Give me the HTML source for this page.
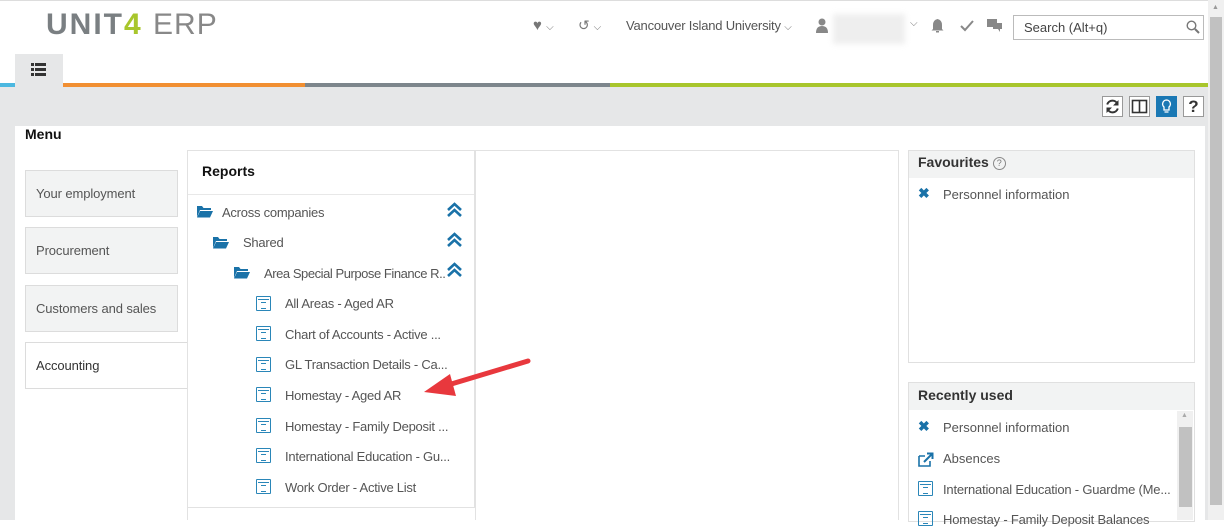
<!DOCTYPE html>
<html><head><meta charset="utf-8"><style>
*{box-sizing:border-box;margin:0;padding:0}
body{width:1224px;height:520px;overflow:hidden;background:#fff;font-family:"Liberation Sans",sans-serif;color:#555;font-size:13px;position:relative}
.a{position:absolute}
.t{position:absolute;white-space:nowrap}
.tab{position:absolute;left:25px;width:153px;height:47px;background:#f2f3f3;border:1px solid #dcdcdc;padding:15px 10px;font-size:13px;color:#555;letter-spacing:-0.1px}
.ri{position:absolute;left:256px;width:15px;height:15px;border:1.5px solid #2a86b8;border-radius:1px}
.ri:before{content:"";position:absolute;left:1px;right:1px;top:2px;height:1px;background:#2a86b8}
.ri:after{content:"";position:absolute;left:4px;top:5px;width:5px;height:5px;border-top:1px solid #2a86b8;border-bottom:1px solid #2a86b8}
.rt{position:absolute;left:285px;white-space:nowrap;font-size:13px;color:#555;letter-spacing:-0.25px}
.fold{position:absolute}
.chev{position:absolute;left:446px}
.btn{position:absolute;top:96px;width:21px;height:21px;border:1px solid #999;background:#fff}
</style></head><body>
<div class="a" style="left:0;top:0;width:1208px;height:1px;background:#ddd"></div>
<div class="t" style="left:46px;top:8px;font-size:30px;letter-spacing:2px;color:#7a7f82;font-weight:bold">UNIT<span style="color:#a8c62c">4</span> <span style="font-weight:normal;color:#888;letter-spacing:1px">ERP</span></div>
<div class="t" style="left:533px;top:17px;font-size:15px;color:#777">♥ <span style="font-size:10px">⌵</span></div>
<div class="t" style="left:578px;top:17px;font-size:14px;color:#777">↺ <span style="font-size:10px">⌵</span></div>
<div class="t" style="left:626px;top:18px;font-size:13px;color:#555;letter-spacing:-0.2px">Vancouver Island University <span style="font-size:10px;color:#777">⌵</span></div>
<svg class="a" style="left:815px;top:18px" width="14" height="15"><circle cx="7" cy="4" r="3.5" fill="#888"/><path d="M1 15 Q1 8 7 8 Q13 8 13 15Z" fill="#888"/></svg>
<div class="a" style="left:833px;top:14px;width:72px;height:30px;background:#eee;filter:blur(3px)"></div>
<div class="t" style="left:910px;top:18px;font-size:10px;color:#777">⌵</div>
<svg class="a" style="left:931px;top:18px" width="13" height="15"><path d="M6.5 1 Q11 2 11 7 L11 11 L12.5 12.5 L0.5 12.5 L2 11 L2 7 Q2 2 6.5 1Z M5 13 h3 v1.5 h-3z" fill="#888"/></svg>
<svg class="a" style="left:960px;top:20px" width="14" height="12"><path d="M1 6 L5 10 L13 1" fill="none" stroke="#888" stroke-width="2"/></svg>
<svg class="a" style="left:987px;top:19px" width="16" height="13"><rect x="0" y="0" width="10" height="8" fill="#888"/><rect x="6" y="4" width="9" height="6" fill="#888"/><path d="M11 10 L13 13 L13 10Z" fill="#888"/></svg>
<div class="a" style="left:1013px;top:15px;width:191px;height:25px;border:1px solid #bbb;background:#fff"></div>
<div class="t" style="left:1024px;top:20px;font-size:13px;color:#444">Search (Alt+q)</div>
<svg class="a" style="left:1186px;top:20px" width="14" height="14"><circle cx="5.5" cy="5.5" r="4.3" fill="none" stroke="#777" stroke-width="1.4"/><path d="M9 9 L13 13" stroke="#777" stroke-width="2"/></svg>
<div class="a" style="left:0;top:83px;width:15px;height:4px;background:#4cb8e0"></div>
<div class="a" style="left:63px;top:83px;width:242px;height:4px;background:#f18f32"></div>
<div class="a" style="left:305px;top:83px;width:305px;height:4px;background:#7d868c"></div>
<div class="a" style="left:610px;top:83px;width:598px;height:4px;background:#a8c62c"></div>
<div class="a" style="left:15px;top:54px;width:48px;height:33px;background:#e6e7e8"></div>
<svg class="a" style="left:31px;top:63px" width="15" height="13"><g fill="#333"><rect x="0" y="0" width="3" height="3"/><rect x="4" y="0" width="11" height="3"/><rect x="0" y="5" width="3" height="3"/><rect x="4" y="5" width="11" height="3"/><rect x="0" y="10" width="3" height="3"/><rect x="4" y="10" width="11" height="3"/></g></svg>
<div class="a" style="left:0;top:87px;width:1208px;height:433px;background:#e6e7e8"></div>
<div class="a" style="left:15px;top:126px;width:1190px;height:394px;background:#fff"></div>
<div class="btn" style="left:1102px"><svg width="19" height="19"><path d="M14.5 7 A5.5 5.5 0 0 0 4.2 7.5 M4.5 12 A5.5 5.5 0 0 0 14.8 11.5" fill="none" stroke="#333" stroke-width="2"/><path d="M15.5 3 L15.5 8.5 L10 8.5Z M3.5 16 L3.5 10.5 L9 10.5Z" fill="#333"/></svg></div>
<div class="btn" style="left:1129px"><svg width="19" height="19"><rect x="2.5" y="3.5" width="14" height="12" fill="none" stroke="#333" stroke-width="1.6"/><path d="M9.5 3.5 V15.5" stroke="#333" stroke-width="1.6"/></svg></div>
<div class="btn" style="left:1156px;background:#1a78b4;border-color:#1a78b4"><svg width="19" height="19"><path d="M9.5 3 A4 4 0 0 0 7 10 L7 13 L12 13 L12 10 A4 4 0 0 0 9.5 3Z M7.5 15 h4" fill="none" stroke="#fff" stroke-width="1.3"/></svg></div>
<div class="btn" style="left:1183px;font-size:17px;font-weight:bold;color:#333;text-align:center;line-height:19px">?</div>
<div class="t" style="left:25px;top:126px;font-size:14px;font-weight:bold;color:#111">Menu</div>
<div class="tab" style="top:170px">Your employment</div>
<div class="tab" style="top:227px">Procurement</div>
<div class="tab" style="top:285px">Customers and sales</div>
<div class="tab" style="top:342px;width:163px;background:#fff;border-right:none;color:#333">Accounting</div>
<div class="a" style="left:187px;top:150px;width:288px;height:358px;border:1px solid #e2e2e2"></div>
<div class="a" style="left:187px;top:389px;width:1px;height:131px;background:#e2e2e2"></div>
<div class="a" style="left:188px;top:194px;width:286px;height:1px;background:#e8e8e8"></div>
<div class="t" style="left:202px;top:163px;font-size:14px;font-weight:bold;color:#111">Reports</div>
<div class="a" style="left:475px;top:150px;width:424px;height:370px;border:1px solid #e2e2e2;border-bottom:none"></div>
<svg class="fold" style="left:197px;top:205px" width="16" height="13"><path d="M0 1 h5 l1.5 2 H14 v2 H3 L0 12Z" fill="#1a72a8"/><path d="M3 6 H16 L13 12.5 H0Z" fill="#1a72a8"/></svg>
<div class="rt" style="left:222px;top:205px">Across companies</div>
<svg class="fold" style="left:213px;top:236px" width="16" height="13"><path d="M0 1 h5 l1.5 2 H14 v2 H3 L0 12Z" fill="#1a72a8"/><path d="M3 6 H16 L13 12.5 H0Z" fill="#1a72a8"/></svg>
<div class="rt" style="left:243px;top:235px">Shared</div>
<svg class="fold" style="left:234px;top:266px" width="16" height="13"><path d="M0 1 h5 l1.5 2 H14 v2 H3 L0 12Z" fill="#1a72a8"/><path d="M3 6 H16 L13 12.5 H0Z" fill="#1a72a8"/></svg>
<div class="rt" style="left:264px;top:266px;letter-spacing:-0.45px">Area Special Purpose Finance R..</div>
<svg class="chev" style="top:202px" width="17" height="16"><path d="M2 8 L8.5 2 L15 8 M2 14 L8.5 8 L15 14" fill="none" stroke="#1a72a8" stroke-width="2.6"/></svg>
<svg class="chev" style="top:232px" width="17" height="16"><path d="M2 8 L8.5 2 L15 8 M2 14 L8.5 8 L15 14" fill="none" stroke="#1a72a8" stroke-width="2.6"/></svg>
<svg class="chev" style="top:262px" width="17" height="16"><path d="M2 8 L8.5 2 L15 8 M2 14 L8.5 8 L15 14" fill="none" stroke="#1a72a8" stroke-width="2.6"/></svg>
<div class="ri" style="top:296px"></div><div class="rt" style="top:296px">All Areas - Aged AR</div>
<div class="ri" style="top:326px"></div><div class="rt" style="top:327px">Chart of Accounts - Active ...</div>
<div class="ri" style="top:357px"></div><div class="rt" style="top:357px">GL Transaction Details - Ca...</div>
<div class="ri" style="top:387px"></div><div class="rt" style="top:388px">Homestay - Aged AR</div>
<div class="ri" style="top:418px"></div><div class="rt" style="top:419px">Homestay - Family Deposit ...</div>
<div class="ri" style="top:448px"></div><div class="rt" style="top:449px">International Education - Gu...</div>
<div class="ri" style="top:479px"></div><div class="rt" style="top:480px">Work Order - Active List</div>
<svg class="a" style="left:418px;top:352px" width="120" height="50"><path d="M110 9 L30 33" stroke="#e8383d" stroke-width="5" stroke-linecap="round"/><path d="M6 40 L32 22 L38 44Z" fill="#e8383d"/></svg>
<div class="a" style="left:908px;top:150px;width:287px;height:213px;border:1px solid #e0e0e0"></div>
<div class="a" style="left:909px;top:151px;width:285px;height:27px;background:#f2f3f3"></div>
<div class="t" style="left:918px;top:154px;font-size:14px;font-weight:bold;color:#333">Favourites <span style="display:inline-block;width:13px;height:13px;border:1px solid #888;border-radius:50%;font-size:9px;text-align:center;line-height:11px;color:#777;font-weight:normal;vertical-align:1px">?</span></div>
<div class="t" style="left:918px;top:185px;font-size:14px;color:#1a72a8;font-weight:bold">✖</div>
<div class="t" style="left:943px;top:187px">Personnel information</div>
<div class="a" style="left:908px;top:382px;width:287px;height:140px;border:1px solid #e0e0e0"></div>
<div class="a" style="left:909px;top:383px;width:285px;height:27px;background:#f2f3f3"></div>
<div class="t" style="left:918px;top:387px;font-size:14px;font-weight:bold;color:#333">Recently used</div>
<div class="t" style="left:918px;top:418px;font-size:14px;color:#1a72a8;font-weight:bold">✖</div>
<div class="t" style="left:943px;top:420px">Personnel information</div>
<svg class="a" style="left:918px;top:452px" width="16" height="15"><path d="M1 4 H7 M1 4 V14 H12 V9" fill="none" stroke="#1a72a8" stroke-width="1.6"/><path d="M6 10 L14 2 M9 1.5 H14.5 V7" fill="none" stroke="#1a72a8" stroke-width="2"/></svg>
<div class="t" style="left:943px;top:451px">Absences</div>
<div class="ri" style="left:918px;top:481px"></div><div class="t" style="left:943px;top:482px;letter-spacing:-0.2px">International Education - Guardme (Me...</div>
<div class="ri" style="left:918px;top:511px"></div><div class="t" style="left:943px;top:512px;letter-spacing:-0.2px">Homestay - Family Deposit Balances</div>
<div class="a" style="left:1177px;top:411px;width:16px;height:109px;background:#f0f0f0"></div>
<div class="a" style="left:1179px;top:427px;width:13px;height:80px;background:#c1c1c1"></div>
<div class="t" style="left:1181px;top:412px;font-size:7px;color:#aaa">▲</div>
<div class="a" style="left:1208px;top:0;width:16px;height:520px;background:#f0f0f0"></div>
<div class="a" style="left:1210px;top:17px;width:12px;height:488px;background:#c1c1c1"></div>
<div class="t" style="left:1212px;top:4px;font-size:7px;color:#999">▲</div>
</body></html>
